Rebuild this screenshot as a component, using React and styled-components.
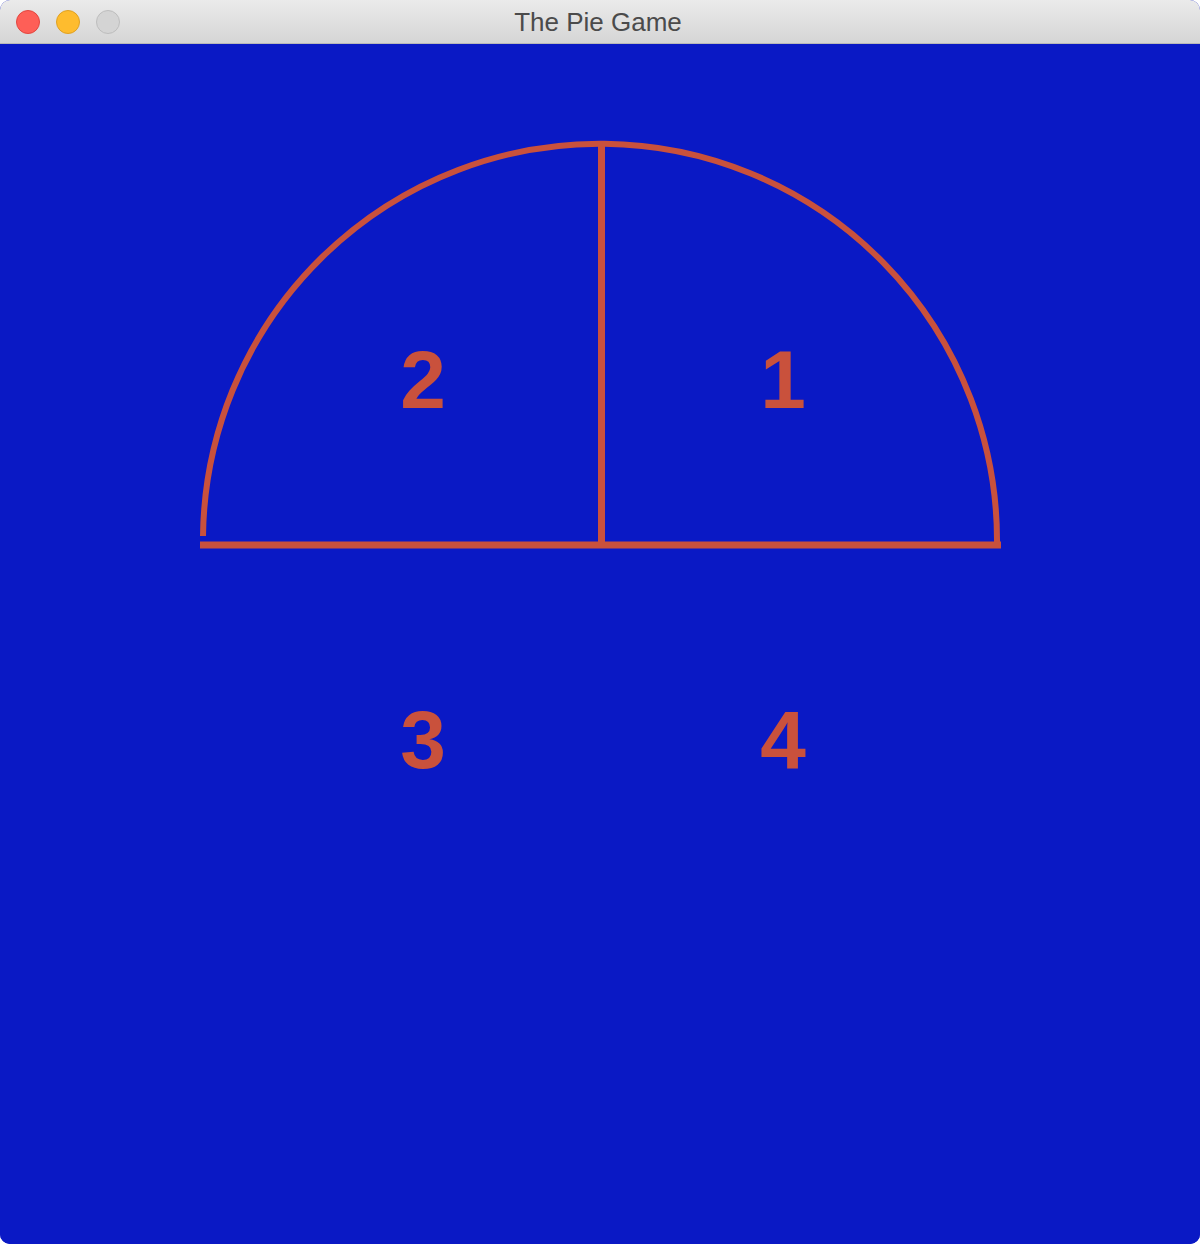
import React from 'react';
import styled, { createGlobalStyle } from 'styled-components';

const GlobalStyle = createGlobalStyle`
  html, body {
    margin: 0;
    padding: 0;
    background: #ffffff;
  }
`;

const PIE_COLOR = '#c9513c';

export default function App() {
  const labels = ['2', '1', '3', '4'];

  return (
    <>
      <GlobalStyle />
      <Window>
        <TitleBar>
          <Lights>
            <Light color="#fe5f57" border="#e2463f" />
            <Light color="#febc2e" border="#dfa123" />
            <Light color="#d4d4d4" border="#bdbdbd" />
          </Lights>
          <Title>The Pie Game</Title>
        </TitleBar>
        <Canvas>
          <PieDrawing width="1200" height="1200" viewBox="0 0 1200 1200">
            <path
              d="M 203 492 A 397 397 0 0 1 997 501"
              fill="none"
              stroke={PIE_COLOR}
              strokeWidth="6"
            />
            <line x1="200" y1="501" x2="1001" y2="501" stroke={PIE_COLOR} strokeWidth="7" />
            <line x1="601.5" y1="101" x2="601.5" y2="501" stroke={PIE_COLOR} strokeWidth="7" />
          </PieDrawing>
          <Labels>
            {labels.map((n) => (
              <Label key={n}>{n}</Label>
            ))}
          </Labels>
        </Canvas>
      </Window>
    </>
  );
}

const Window = styled.div`
  width: 1200px;
  height: 1244px;
  display: flex;
  flex-direction: column;
  border-radius: 10px;
  overflow: hidden;
  background: #0a19c5;
`;

const TitleBar = styled.div`
  height: 43px;
  flex-shrink: 0;
  position: relative;
  display: flex;
  align-items: center;
  justify-content: center;
  background: linear-gradient(#ebebeb, #d5d5d5);
  border-bottom: 1px solid #b9b9b9;
`;

const Lights = styled.div`
  position: absolute;
  left: 16px;
  top: 10px;
  display: flex;
  gap: 16px;
`;

const Light = styled.span`
  width: 22px;
  height: 22px;
  border-radius: 50%;
  background: ${(p) => p.color};
  border: 1px solid ${(p) => p.border};
`;

const Title = styled.div`
  font-family: 'Helvetica Neue', 'Liberation Sans', Arial, sans-serif;
  font-size: 26px;
  color: #4b4b4b;
  margin-left: -4px;
  margin-top: 2px;
`;

const Canvas = styled.div`
  position: relative;
  flex: 1;
  background: #0a19c5;
`;

const PieDrawing = styled.svg`
  position: absolute;
  inset: 0;
`;

const Labels = styled.div`
  position: relative;
  display: grid;
  grid-template-columns: 360px 360px;
  grid-auto-rows: 360px;
  padding: 156px 0 0 243px;
`;

const Label = styled.div`
  display: flex;
  align-items: center;
  justify-content: center;
  font-family: 'Liberation Sans', Arial, sans-serif;
  font-weight: 700;
  font-size: 82px;
  line-height: 1;
  color: ${PIE_COLOR};
`;
